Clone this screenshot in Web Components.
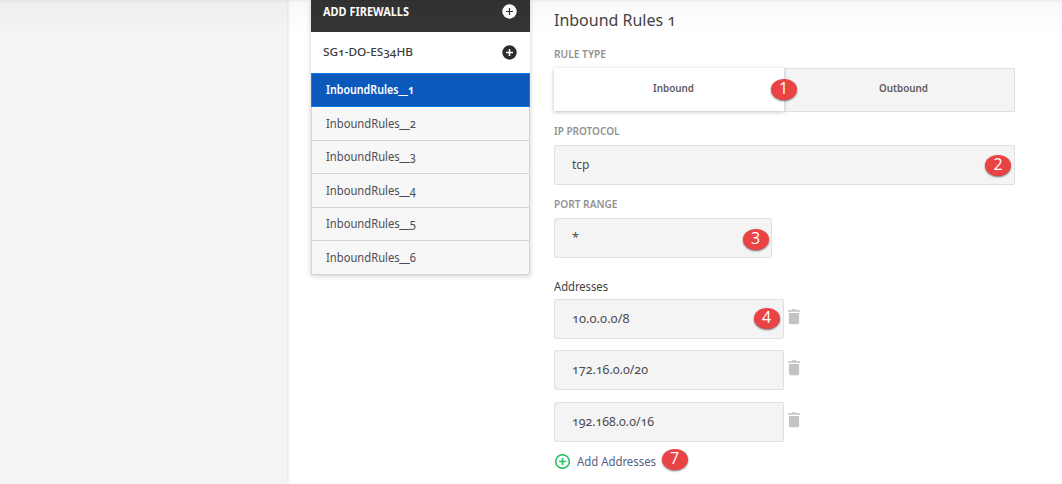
<!DOCTYPE html>
<html lang="en"><head><meta charset="utf-8"><title>Firewall rules</title>
<style>html,body{margin:0;height:100%;overflow:hidden;background:#fff}body{font-family:"Noto Sans","Open Sans",sans-serif}</style></head>
<body><firewall-page></firewall-page>
<script>
const define=(name,html,setup)=>customElements.define(name,class extends HTMLElement{
  connectedCallback(){ if(this.shadowRoot)return;
    const t=document.createElement('template'); t.innerHTML=html;
    this.attachShadow({mode:'open'}).append(t.content.cloneNode(true));
    if(setup)setup(this,this.shadowRoot);
  }});

// Text label condensed to a given width
define('fit-text',`<style>:host{display:block;white-space:nowrap;flex:none}span{display:inline-block;transform-origin:0 50%;font-variant-numeric:oldstyle-nums}</style><span><slot></slot></span>`,(h,r)=>{
  const s=r.querySelector('span'),w=+h.getAttribute('w'); h.style.width=w+'px';
  const n=s.getBoundingClientRect().width; if(n)s.style.transform='scaleX('+w/n+')';
});

define('num-badge',`<style>:host{position:absolute;width:26px;height:21px;border-radius:50%;background:#e94344;box-shadow:0 1px 2px #0008;color:#fff;font:400 16px/19px "Open Sans",sans-serif;text-align:center;z-index:2}</style><slot></slot>`);

define('plus-disc',`<style>:host{display:block;width:15px;height:15px;flex:none}svg{display:block}</style><svg width="15" height="15" viewBox="0 0 15 15"><circle cx="7.5" cy="7.5" r="7.2"/><path d="M7.5 4v7M4 7.5h7" fill="none"/></svg>`,(h,r)=>{
  const k=h.getAttribute('kind'),c=r.querySelector('circle'),p=r.querySelector('path');
  c.setAttribute('fill',k=='light'?'#fff':k=='dark'?'#2d2d2d':'none');
  p.setAttribute('stroke',k=='light'?'#333':k=='dark'?'#fff':'#21c063');
  p.setAttribute('stroke-width',k=='light'?1.2:1.6);
  if(k=='ring'){c.setAttribute('r','6.8');c.setAttribute('stroke','#21c063');c.setAttribute('stroke-width','1.5')}
});

define('trash-icon',`<style>:host{display:block;width:12px;height:16px;flex:none}svg{display:block}</style><svg width="12" height="16" viewBox="0 0 12 16"><path fill="#c3c3c3" d="M0 1.2h3.4L4.3.2h3.4l.9 1H12v1.5H0zM.9 4h10.2v9.6q0 1.6-1.6 1.6h-7Q.9 15.2.9 13.6z"/></svg>`);

define('menu-item',`<style>:host{display:flex;align-items:center;box-sizing:border-box;height:var(--h,34px);padding:0 0 2px 14px;background:#f7f7f7;border:1px solid #d6d6d6;border-top:0;color:#4b4f55;font-size:13px;line-height:18px}
:host([active]){background:#0b59ba;border:1px solid #0a7bf5;color:#fff;font-weight:600}</style><slot></slot>`);

define('side-menu',`<style>:host{display:block;width:219px;height:275px;box-shadow:0 1px 5px #0003}
.row{display:flex;justify-content:space-between;align-items:center;box-sizing:border-box;padding:0 13.5px 0 12px;font-size:11.5px;line-height:16px}
.head{height:32px;background:#333;color:#fff;font-weight:700;padding-bottom:9px}.group{height:41px;background:#fff;color:#3d3d3d;font-weight:500;padding-bottom:1px}
.wide{display:inline-block;transform:scaleX(2.1);margin:0 3px}</style>
<div class="row head"><fit-text w="86">ADD FIREWALLS</fit-text><plus-disc kind="light"></plus-disc></div>
<div class="row group"><fit-text w="90">SG1-DO-ES34HB</fit-text><plus-disc kind="dark"></plus-disc></div>
<menu-item active><fit-text w="88">InboundRules<span class="wide">_</span>1</fit-text></menu-item>
<menu-item><fit-text w="90">InboundRules<span class="wide">_</span>2</fit-text></menu-item>
<menu-item style="--h:33px"><fit-text w="90">InboundRules<span class="wide">_</span>3</fit-text></menu-item>
<menu-item><fit-text w="90">InboundRules<span class="wide">_</span>4</fit-text></menu-item>
<menu-item style="--h:33px"><fit-text w="90">InboundRules<span class="wide">_</span>5</fit-text></menu-item>
<menu-item><fit-text w="90">InboundRules<span class="wide">_</span>6</fit-text></menu-item>`);

define('field-label',`<style>:host{display:block;height:16px;font-size:11px;line-height:16px;font-weight:600;color:#929292}</style><slot></slot>`);

define('value-box',`<style>:host{display:flex;align-items:center;position:relative;box-sizing:border-box;height:40px;padding:0 0 2px 17px;border:1px solid #e0e0e0;border-radius:2px;background:#f4f4f4;color:#4c4c4f;font-size:13px;line-height:18px}</style><slot></slot><slot name="badge"></slot>`);

define('rule-tabs',`<style>:host{display:grid;grid-template-columns:230px 231px;height:44px;position:relative;font-size:11.5px;line-height:16px;font-weight:600;color:#5d5d5d}
div{display:flex;justify-content:center;align-items:center;box-sizing:border-box;padding-bottom:3px}.on{height:43px;background:#fff;box-shadow:0 1px 4px #0004;z-index:1;padding-left:8px}.off{background:#f4f4f4;border:1px solid #e0e0e0;border-left:0;padding:0 0 4px 8px}num-badge{left:216.5px;top:11px}</style>
<div class="on"><fit-text w="41">Inbound</fit-text></div><div class="off"><fit-text w="49">Outbound</fit-text></div><num-badge>1</num-badge>`);

define('address-row',`<style>:host{display:flex;align-items:flex-start;gap:4px;height:40px}value-box{width:230px}trash-icon{margin-top:10px}</style><value-box><slot></slot><slot name="badge"></slot></value-box><trash-icon></trash-icon>`);

define('rule-form',`<style>:host{display:block;width:461px;padding-top:7px}
.title{font-size:17px;line-height:26px;height:26px;color:#444}.a{margin-top:13px}.b{margin-top:6px}.c{margin-top:11px}.d{margin-top:6px}.e{margin-top:11px}.f{margin-top:6px}
.port{width:218px}.cap{margin-top:20px;height:18px;font-size:12.5px;line-height:18px;color:#424242}
.list{display:grid;grid-template-rows:51px 52px 40px;margin-top:3px}
.add{display:flex;align-items:center;position:relative;gap:7px;padding-left:1px;margin-top:9px;height:20px;color:#566185;font-size:13px;line-height:18px}</style>
<div class="title"><fit-text w="122">Inbound Rules 1</fit-text></div>
<field-label class="a"><fit-text w="52">RULE TYPE</fit-text></field-label>
<rule-tabs class="b"></rule-tabs>
<field-label class="c"><fit-text w="65.5">IP PROTOCOL</fit-text></field-label>
<value-box class="d"><fit-text w="17.5">tcp</fit-text><num-badge slot="badge" style="left:430px;top:9px">2</num-badge></value-box>
<field-label class="e"><fit-text w="63.5">PORT RANGE</fit-text></field-label>
<value-box class="f port"><fit-text w="7">*</fit-text><num-badge slot="badge" style="left:187.5px;top:10px">3</num-badge></value-box>
<div class="cap"><fit-text w="54">Addresses</fit-text></div>
<div class="list"><address-row><fit-text w="57.5">10.0.0.0/8</fit-text><num-badge slot="badge" style="left:198.5px;top:8px">4</num-badge></address-row>
<address-row><fit-text w="76">172.16.0.0/20</fit-text></address-row>
<address-row><fit-text w="82">192.168.0.0/16</fit-text></address-row></div>
<div class="add"><plus-disc kind="ring"></plus-disc><fit-text w="79">Add Addresses</fit-text><num-badge style="left:107.5px;top:-2px">7</num-badge></div>`);

define('firewall-page',`<style>:host{display:grid;grid-template-columns:287px 24px 219px 24px 461px;height:484px;overflow:hidden;position:relative;background:#fff}
aside{background:#f4f4f4;box-shadow:0 0 4px #0003}.shade{position:absolute;inset:0 0 auto;height:34px;background:linear-gradient(#00000014,#00000006 3px,#0000);pointer-events:none;z-index:3}</style>
<aside></aside><i></i><side-menu></side-menu><i></i><rule-form></rule-form><div class="shade"></div>`);
</script></body></html>
